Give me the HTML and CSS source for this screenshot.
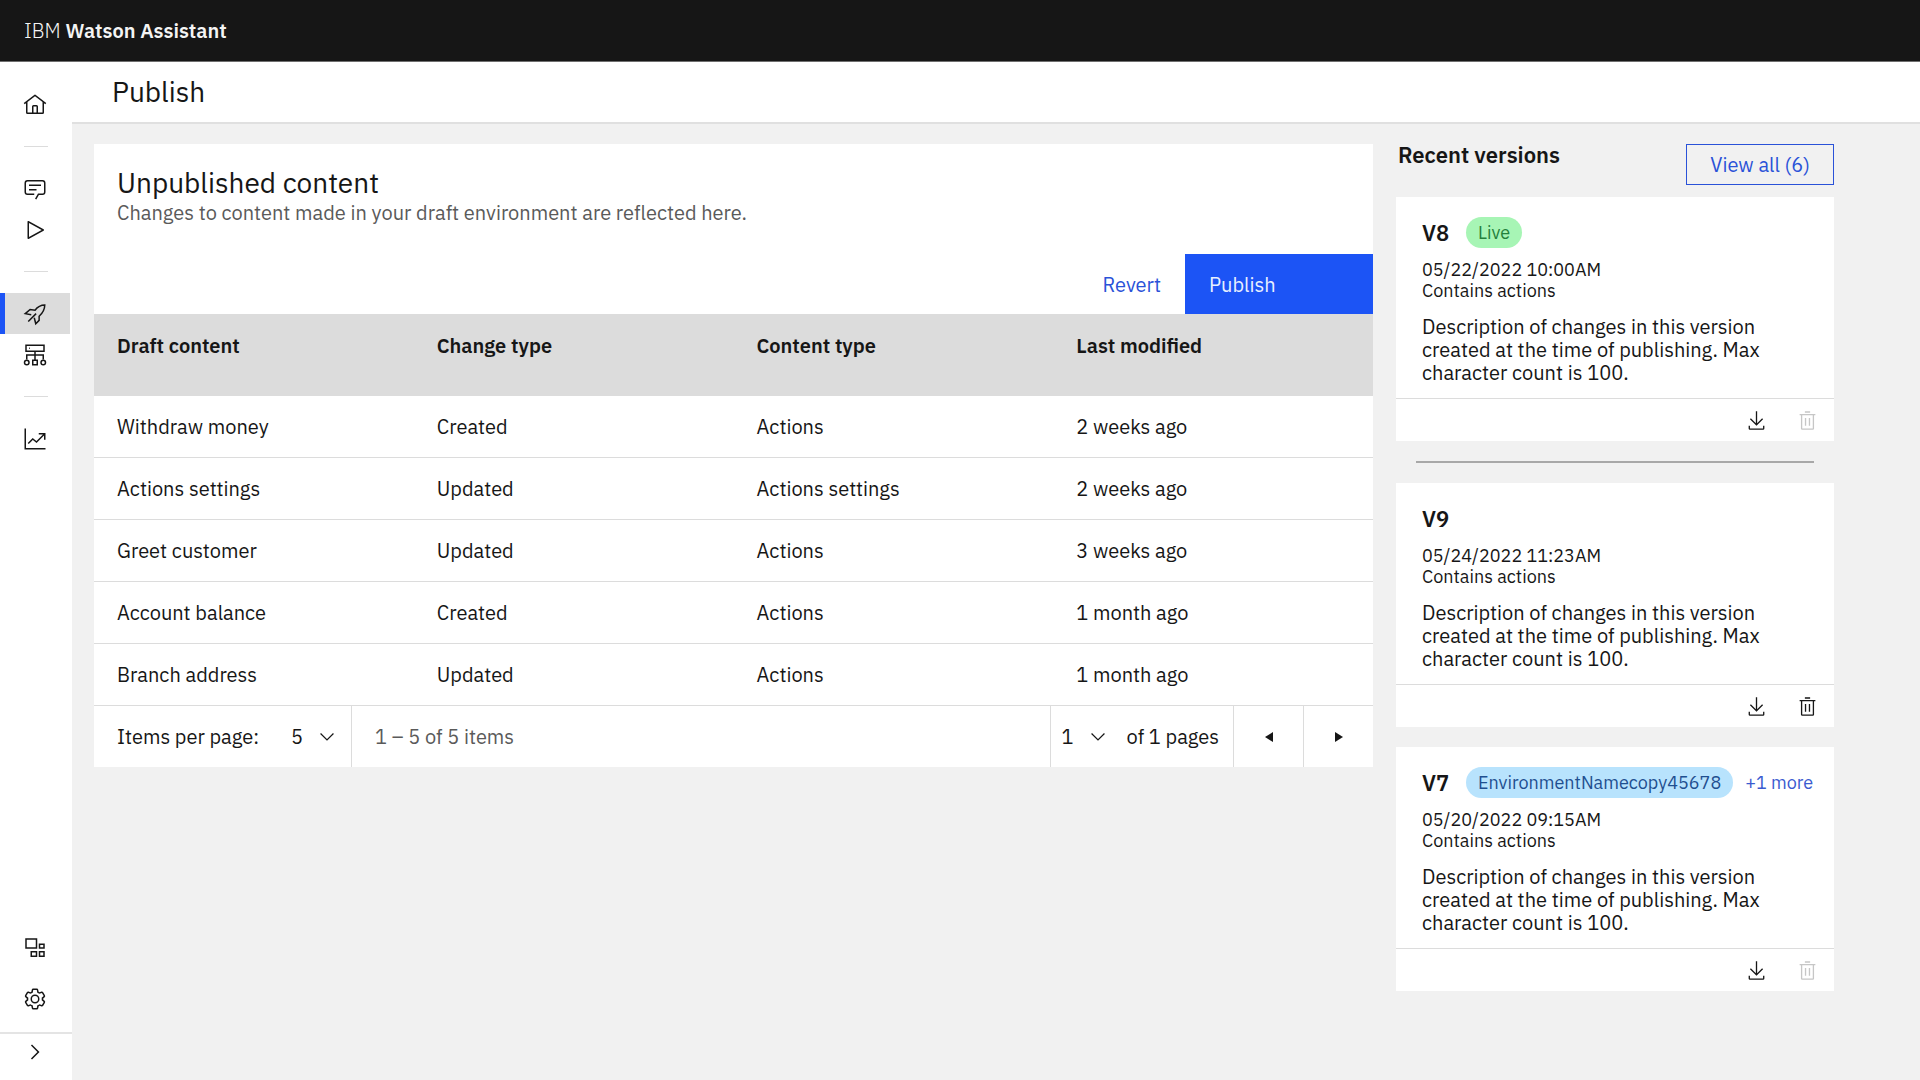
FILE: index.html
```html
<!DOCTYPE html>
<html lang="en">
<head>
<meta charset="utf-8">
<meta name="viewport" content="width=device-width, initial-scale=1">
<title>Publish - IBM Watson Assistant</title>
<link rel="stylesheet" href="styles.css">
</head>
<body>
<svg class="sprite" aria-hidden="true">
  <symbol id="download" viewBox="0 0 32 32"><path d="M26 24v4H6v-4H4v4a2 2 0 0 0 2 2h20a2 2 0 0 0 2-2v-4zM26 14l-1.41-1.41L17 20.17V2h-2v18.17l-7.59-7.58L6 14l10 10z"/></symbol>
  <symbol id="trash" viewBox="0 0 32 32"><path d="M12 12h2v12h-2zM18 12h2v12h-2zM4 6v2h2v20a2 2 0 0 0 2 2h16a2 2 0 0 0 2-2V8h2V6zm4 22V8h16v20zM12 2h8v2h-8z"/></symbol>
  <symbol id="chevron-down" viewBox="0 0 32 32"><path d="M16 22 5 11l1.400-1.400 9.600 9.600 9.600-9.600L27 11z"/></symbol>
</svg>

<header class="topbar">
  <a class="brand" href="#">IBM <strong>Watson Assistant</strong></a>
</header>

<div class="shell">
  <nav class="sidebar" aria-label="Main">
    <div class="nav-main">
      <a class="nav-item" href="#" aria-label="Home"><svg class="icon" viewBox="0 0 32 32"><path d="M16.612 2.214a1.010 1.010 0 0 0-1.243 0L1 13.419l1.243 1.572L4 13.621V26a2 2 0 0 0 2 2h20a2 2 0 0 0 2-2V13.630L29.757 15 31 13.428zM18 26h-4v-8h4zm2 0v-8a2 2 0 0 0-2-2h-4a2 2 0 0 0-2 2v8H6V12.062l10-7.790 10 7.800V26z"/></svg></a>
      <hr class="nav-divider">
      <a class="nav-item" href="#" aria-label="Actions"><svg class="icon" viewBox="0 0 32 32"><path d="M17.740 30 16 29l4-7h6a2 2 0 0 0 2-2V8a2 2 0 0 0-2-2H6a2 2 0 0 0-2 2v12a2 2 0 0 0 2 2h9v2H6a4 4 0 0 1-4-4V8a4 4 0 0 1 4-4h20a4 4 0 0 1 4 4v12a4 4 0 0 1-4 4h-4.840zM8 10h16v2H8zM8 16h10v2H8z"/></svg></a>
      <a class="nav-item" href="#" aria-label="Preview"><svg class="icon" viewBox="0 0 32 32"><path d="M7 28a1 1 0 0 1-1-1V5a1 1 0 0 1 1.482-.876l20 11a1 1 0 0 1 0 1.752l-20 11A1 1 0 0 1 7 28zM8 6.691v18.618L24.925 16z"/></svg></a>
      <hr class="nav-divider">
      <a class="nav-item nav-item-active" href="#" aria-label="Publish" aria-current="page"><svg class="icon icon-line" viewBox="0 0 32 32"><path d="M11 17 3 15.500 9.500 10l6.500 1C19 7 23 4 29 4c0 6-2 10-7.500 15v5.500L17 29l-2-8M7 26 17.500 15.500"/></svg></a>
      <a class="nav-item" href="#" aria-label="Environments"><svg class="icon icon-line" viewBox="0 0 32 32"><path d="M4 3h24v8H4zM16 11v11M5 22v-6h22v6M13 23h6v6h-6z"/><circle cx="5" cy="26" r="3"/><circle cx="27" cy="26" r="3"/><path d="M8 7h1"/></svg></a>
      <hr class="nav-divider">
      <a class="nav-item" href="#" aria-label="Analytics"><svg class="icon icon-line" viewBox="0 0 32 32"><path d="M3 2v27h27M7 22l6-6 5 4 10-10M21 9h8v8"/></svg></a>
    </div>
    <div class="nav-tools">
      <a class="nav-item" href="#" aria-label="Integrations"><svg class="icon icon-line" viewBox="0 0 32 32"><path d="M4 4h14v12H4zM22 11h6v5h-6zM11 21h7v6h-7zM22 21h6v6h-6z"/></svg></a>
      <a class="nav-item" href="#" aria-label="Settings"><svg class="icon" viewBox="0 0 32 32"><path d="M27 16.760v-1.530l1.920-1.680A2 2 0 0 0 29.300 11l-2.360-4a2 2 0 0 0-1.730-1 2 2 0 0 0-.64.1l-2.430.82a11.350 11.350 0 0 0-1.310-.75l-.51-2.520a2 2 0 0 0-2-1.610h-4.680a2 2 0 0 0-2 1.610l-.51 2.520a11.480 11.480 0 0 0-1.320.75l-2.380-.86A2 2 0 0 0 6.790 6a2 2 0 0 0-1.730 1L2.700 11a2 2 0 0 0 .41 2.510L5 15.240v1.530l-1.890 1.680A2 2 0 0 0 2.700 21l2.360 4a2 2 0 0 0 1.730 1 2 2 0 0 0 .64-.1l2.430-.82a11.350 11.350 0 0 0 1.310.75l.51 2.520a2 2 0 0 0 2 1.610h4.720a2 2 0 0 0 2-1.610l.51-2.520a11.480 11.480 0 0 0 1.320-.75l2.420.82a2 2 0 0 0 .64.1 2 2 0 0 0 1.730-1l2.280-4a2 2 0 0 0-.41-2.510zM25.210 24l-3.430-1.160a8.860 8.860 0 0 1-2.710 1.570L18.360 28h-4.720l-.71-3.550a9.360 9.360 0 0 1-2.700-1.570L6.790 24l-2.360-4 2.720-2.400a8.900 8.900 0 0 1 0-3.130L4.430 12l2.360-4 3.430 1.160a8.860 8.860 0 0 1 2.710-1.570L13.640 4h4.720l.71 3.550a9.360 9.360 0 0 1 2.700 1.570L25.210 8l2.360 4-2.720 2.400a8.900 8.900 0 0 1 0 3.130L27.570 20zM16 22a6 6 0 1 1 6-6 5.940 5.940 0 0 1-6 6zm0-10a3.910 3.910 0 0 0-4 4 3.910 3.910 0 0 0 4 4 3.910 3.910 0 0 0 4-4 3.910 3.910 0 0 0-4-4z"/></svg></a>
    </div>
    <div class="nav-expand">
      <button class="expand-button" type="button" aria-label="Expand navigation"><svg class="icon" viewBox="0 0 32 32"><path d="M22 16 12 26l-1.400-1.400 8.600-8.600-8.600-8.600L12 6z"/></svg></button>
    </div>
  </nav>

  <div class="page">
    <div class="page-header"><h1 class="page-title">Publish</h1></div>

    <main class="content">
      <section class="drafts">
        <div class="drafts-header">
          <h2 class="drafts-title">Unpublished content</h2>
          <p class="drafts-text">Changes to content made in your draft environment are reflected here.</p>
        </div>
        <div class="toolbar">
          <button class="button-ghost" type="button">Revert</button>
          <button class="button-primary" type="button">Publish</button>
        </div>
        <table class="table">
          <thead>
            <tr><th scope="col">Draft content</th><th scope="col">Change type</th><th scope="col">Content type</th><th scope="col">Last modified</th></tr>
          </thead>
          <tbody>
            <tr><td>Withdraw money</td><td>Created</td><td>Actions</td><td>2 weeks ago</td></tr>
            <tr><td>Actions settings</td><td>Updated</td><td>Actions settings</td><td>2 weeks ago</td></tr>
            <tr><td>Greet customer</td><td>Updated</td><td>Actions</td><td>3 weeks ago</td></tr>
            <tr><td>Account balance</td><td>Created</td><td>Actions</td><td>1 month ago</td></tr>
            <tr><td>Branch address</td><td>Updated</td><td>Actions</td><td>1 month ago</td></tr>
          </tbody>
        </table>
        <div class="pagination">
          <div class="page-size">
            <label for="page-size">Items per page:</label>
            <span class="select"><select id="page-size"><option>5</option><option>10</option></select><svg class="select-arrow" aria-hidden="true"><use href="#chevron-down"/></svg></span>
          </div>
          <p class="page-range">1 – 5 of 5 items</p>
          <div class="page-number">
            <span class="select"><select id="page-number" aria-label="Page number"><option>1</option></select><svg class="select-arrow" aria-hidden="true"><use href="#chevron-down"/></svg></span>
            <label for="page-number">of 1 pages</label>
          </div>
          <button class="page-button" type="button" aria-label="Previous page"><svg class="caret" viewBox="0 0 8 10"><path d="M8 0v10L0 5z"/></svg></button>
          <button class="page-button" type="button" aria-label="Next page"><svg class="caret" viewBox="0 0 8 10"><path d="M0 0v10l8-5z"/></svg></button>
        </div>
      </section>

      <aside class="versions">
        <div class="versions-header">
          <h2 class="versions-title">Recent versions</h2>
          <button class="button-outline" type="button">View all (6)</button>
        </div>

        <div class="card-list">
          <article class="card">
            <div class="card-body">
              <div class="card-heading"><h3 class="card-title">V8</h3><span class="tag tag-green">Live</span></div>
              <p class="card-meta">05/22/2022 10:00AM<br>Contains actions</p>
              <p class="card-text">Description of changes in this version created at the time of publishing. Max character count is 100.</p>
            </div>
            <div class="card-actions">
              <button class="icon-button" type="button" aria-label="Download V8"><svg class="icon-small"><use href="#download"/></svg></button>
              <button class="icon-button" type="button" aria-label="Delete V8" disabled><svg class="icon-small"><use href="#trash"/></svg></button>
            </div>
          </article>

          <hr class="versions-divider">

          <article class="card">
            <div class="card-body">
              <div class="card-heading"><h3 class="card-title">V9</h3></div>
              <p class="card-meta">05/24/2022 11:23AM<br>Contains actions</p>
              <p class="card-text">Description of changes in this version created at the time of publishing. Max character count is 100.</p>
            </div>
            <div class="card-actions">
              <button class="icon-button" type="button" aria-label="Download V9"><svg class="icon-small"><use href="#download"/></svg></button>
              <button class="icon-button" type="button" aria-label="Delete V9"><svg class="icon-small"><use href="#trash"/></svg></button>
            </div>
          </article>

          <article class="card">
            <div class="card-body">
              <div class="card-heading"><h3 class="card-title">V7</h3><span class="tag tag-blue">EnvironmentNamecopy45678</span><a class="more-link" href="#">+1 more</a></div>
              <p class="card-meta">05/20/2022 09:15AM<br>Contains actions</p>
              <p class="card-text">Description of changes in this version created at the time of publishing. Max character count is 100.</p>
            </div>
            <div class="card-actions">
              <button class="icon-button" type="button" aria-label="Download V7"><svg class="icon-small"><use href="#download"/></svg></button>
              <button class="icon-button" type="button" aria-label="Delete V7" disabled><svg class="icon-small"><use href="#trash"/></svg></button>
            </div>
          </article>
        </div>
      </aside>
    </main>
  </div>
</div>
</body>
</html>
```
FILE: styles.css
```css
* { box-sizing: border-box; }

body {
  display: flex;
  flex-direction: column;
  min-height: 100vh;
  margin: 0;
  background: #f1f1f1;
  color: #161616;
  font-family: "IBM Plex Sans", "Noto Sans", sans-serif;
  font-size: 20px;
  line-height: 24px;
}

h1, h2, h3, p, hr { margin: 0; }
hr { border: 0; }
button, select {
  border: 0;
  border-radius: 0;
  background: none;
  color: inherit;
  font: inherit;
}
button { padding: 0; }
a { text-decoration: none; }
svg { display: block; fill: currentColor; }
.sprite { display: none; }

/* Top bar */
.topbar {
  display: flex;
  align-items: center;
  height: 62px;
  padding: 0 24px;
  border-bottom: 1px solid #6f6f6f;
  background: #161616;
}
.brand { color: #f4f4f4; font-weight: 300; }
.brand strong { font-weight: 600; }

/* Side navigation */
.shell { display: flex; flex: 1; }
.sidebar {
  display: flex;
  flex-direction: column;
  flex: none;
  width: 72px;
  background: #fff;
}
.nav-main { flex: 1; padding-top: 22px; }
.nav-item {
  display: flex;
  align-items: center;
  height: 41px;
  margin-right: 2px;
  padding-left: 23px;
  color: #161616;
}
.nav-item-active {
  padding-left: 18px;
  border-left: 5px solid #1c54f5;
  background: #dcdcdc;
}
.nav-divider { width: 24px; height: 1px; margin: 21px 24px; background: #dcdcdc; }
.nav-tools { padding-bottom: 8px; }
.nav-tools .nav-item { height: 51px; }
.nav-expand { padding-bottom: 10px; border-top: 2px solid #e4e4e4; }
.expand-button { display: flex; align-items: center; width: 100%; height: 36px; padding-left: 23px; }
.icon { width: 24px; height: 24px; }
.icon-line { fill: none; stroke: currentColor; stroke-width: 2; }

/* Page */
.page { flex: 1; min-width: 0; }
.page-header {
  display: flex;
  align-items: center;
  height: 62px;
  padding-left: 40px;
  border-bottom: 2px solid #e0e0e0;
  background: #fff;
}
.page-title { font-size: 28px; line-height: 34px; font-weight: 400; }
.content {
  display: grid;
  grid-template-columns: minmax(0, 1fr) 438px;
  align-items: start;
  gap: 23px;
  padding: 20px 86px 20px 22px;
}

/* Unpublished content */
.drafts { background: #fff; }
.drafts-header { padding: 22px 23px 28px; }
.drafts-title { font-size: 28px; line-height: 34px; font-weight: 400; }
.drafts-text { line-height: 26px; color: #5a5a5a; }
.toolbar { display: flex; justify-content: flex-end; height: 60px; }
.button-ghost { padding: 2px 24px 0; color: #2a52d8; }
.button-primary { width: 188px; padding: 2px 24px 0; background: #1c54f5; color: #e8f0ff; text-align: left; }

.table { width: 100%; border-collapse: separate; border-spacing: 0; table-layout: fixed; }
.table th {
  height: 82px;
  padding: 20px 23px;
  background: #dcdcdc;
  font-weight: 600;
  text-align: left;
  vertical-align: top;
}
.table td { height: 62px; padding: 0 23px; border-bottom: 1px solid #dcdcdc; }

.pagination { display: flex; height: 61px; }
.pagination > * { display: flex; align-items: center; }
.pagination > * + * { border-left: 1px solid #dcdcdc; }
.page-size { gap: 32px; padding: 0 14px 0 23px; }
.page-range { flex: 1; padding-left: 23px; color: #5a5a5a; }
.page-number { gap: 19px; padding: 0 14px 0 11px; }
.page-button { justify-content: center; width: 70px; }
.caret { width: 8px; height: 10px; }
.select { display: grid; width: 46px; }
.select select { grid-area: 1 / 1; padding: 0; appearance: none; }
.select-arrow { grid-area: 1 / 1; place-self: center end; width: 20px; height: 20px; pointer-events: none; }

/* Recent versions */
.versions-header { display: flex; justify-content: space-between; margin-bottom: 12px; padding-left: 2px; }
.versions-title { font-size: 22px; line-height: 22px; font-weight: 600; }
.button-outline { height: 41px; padding: 0 23px; border: 1px solid #2a52d8; color: #2a52d8; }
.card-list { display: flex; flex-direction: column; gap: 20px; }
.versions-divider { height: 2px; margin: 0 20px; background: #a8a8a8; }

.card { background: #fff; }
.card-body { padding: 20px 16px 14px 26px; }
.card-heading { display: flex; align-items: center; min-height: 31px; }
.card-title { width: 44px; font-size: 22px; line-height: 24px; font-weight: 600; }
.tag { padding: 0 12px; border-radius: 16px; font-size: 18px; line-height: 31px; }
.tag-green { background: #a7f5b5; color: #24803c; }
.tag-blue { background: #b8e3fd; color: #1f4f90; }
.more-link { margin-left: 12px; color: #3a5bd0; font-size: 18px; white-space: nowrap; }
.card-meta { margin-top: 11px; font-size: 18px; line-height: 21px; }
.card-text { margin-top: 14px; line-height: 23px; }
.card-actions { display: flex; justify-content: flex-end; gap: 11px; padding-right: 7px; border-top: 1px solid #dcdcdc; }
.icon-button { display: grid; place-items: center; width: 40px; height: 42px; }
.icon-button:disabled { color: #c6c6c6; }
.icon-small { width: 21px; height: 21px; }
```
